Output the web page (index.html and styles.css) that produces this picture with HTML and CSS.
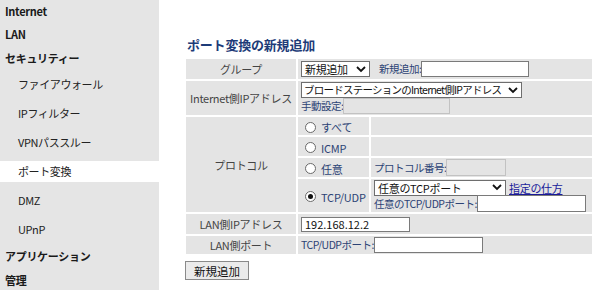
FILE: index.html
```html
<!DOCTYPE html>
<html lang="ja">
<head>
<meta charset="utf-8">
<title>ポート変換の新規追加</title>
<link rel="stylesheet" href="styles.css">
</head>
<body>
<div class="page">
  <nav class="side">
    <div class="top first">Internet</div>
    <div class="top">LAN</div>
    <div class="top">セキュリティー</div>
    <div class="sub">ファイアウォール</div>
    <div class="sub">IPフィルター</div>
    <div class="sub">VPNパススルー</div>
    <div class="sub active">ポート変換</div>
    <div class="sub">DMZ</div>
    <div class="sub">UPnP</div>
    <div class="top">アプリケーション</div>
    <div class="top">管理</div>
  </nav>
  <main class="main">
    <h1 class="title">ポート変換の新規追加</h1>
    <table class="form">
      <colgroup><col class="c1"><col class="c2"><col class="c3"></colgroup>
      <tr class="r-group">
        <th>グループ</th>
        <td colspan="2" class="pad">
          <div class="line">
            <span class="select s-group"><span class="val">新規追加</span><svg class="chev" viewBox="0 0 10 7"><polyline points="1,1 5,5 9,1"/></svg></span>
            <span class="lbl l-new">新規追加:</span><span class="input i-new"></span>
          </div>
        </td>
      </tr>
      <tr class="r-inet">
        <th>Internet側IPアドレス</th>
        <td colspan="2" class="pad">
          <div class="line">
            <span class="select s-inet"><span class="val">ブロードステーションのInternet側IPアドレス</span><svg class="chev" viewBox="0 0 10 7"><polyline points="1,1 5,5 9,1"/></svg></span>
          </div>
          <div class="line">
            <span class="lbl">手動設定:</span><span class="input disabled i-manual"></span>
          </div>
        </td>
      </tr>
      <tr class="r-all">
        <th rowspan="4">プロトコル</th>
        <td class="radio-cell"><span class="radio"></span><span class="rlbl">すべて</span></td>
        <td></td>
      </tr>
      <tr class="r-icmp">
        <td class="radio-cell"><span class="radio"></span><span class="rlbl">ICMP</span></td>
        <td></td>
      </tr>
      <tr class="r-any">
        <td class="radio-cell"><span class="radio"></span><span class="rlbl">任意</span></td>
        <td class="pad">
          <div class="line"><span class="lbl">プロトコル番号:</span><span class="input disabled i-proto"></span></div>
        </td>
      </tr>
      <tr class="r-tcp">
        <td class="radio-cell"><span class="radio checked"></span><span class="rlbl">TCP/UDP</span></td>
        <td class="pad">
          <div class="line">
            <span class="select s-tcp"><span class="val">任意のTCPポート</span><svg class="chev" viewBox="0 0 10 7"><polyline points="1,1 5,5 9,1"/></svg></span>
            <a class="link" href="#">指定の仕方</a>
          </div>
          <div class="line">
            <span class="lbl">任意のTCP/UDPポート:</span><span class="input i-tcp"></span>
          </div>
        </td>
      </tr>
      <tr class="r-lanip">
        <th>LAN側IPアドレス</th>
        <td colspan="2" class="pad"><span class="input i-lanip">192.168.12.2</span></td>
      </tr>
      <tr class="r-lanport">
        <th>LAN側ポート</th>
        <td colspan="2" class="pad">
          <div class="line"><span class="lbl">TCP/UDPポート:</span><span class="input i-lanport"></span></div>
        </td>
      </tr>
    </table>
    <button class="btn" type="button">新規追加</button>
  </main>
</div>
</body>
</html>
```

FILE: styles.css
```css
html, body {
  margin: 0;
  padding: 0;
  background: #ffffff;
}
body {
  font-family: "Noto Sans CJK JP", "Noto Sans", sans-serif;
  font-size: 11px;
  color: #333333;
}
.page {
  display: flex;
  height: 290px;
  width: 600px;
  overflow: hidden;
}

/* sidebar */
.side {
  flex: none;
  width: 159px;
  background: #e5e5e5;
  display: flex;
  flex-direction: column;
}
.side .top {
  height: 24px;
  line-height: 24px;
  padding-left: 5px;
  font-weight: bold;
  color: #1a1a1a;
  letter-spacing: -0.3px;
}
.side .top.first {
  height: 22px;
  line-height: 22px;
}
.side .sub {
  height: 21px;
  line-height: 21px;
  margin: 4px 0;
  padding-left: 18px;
  color: #222222;
  letter-spacing: -0.4px;
}
.side .sub.active {
  background: #ffffff;
}

/* main */
.main {
  flex: 1;
  padding: 37px 0 0 25px;
}
.title {
  margin: 0 0 4px 3px;
  font-size: 13px;
  line-height: 16px;
  font-weight: bold;
  color: #1d3b78;
  letter-spacing: -0.2px;
}
.form {
  border-spacing: 2px;
  width: 410px;
  table-layout: fixed;
}
.form col.c1 { width: 110px; }
.form col.c2 { width: 71px; }
.form col.c3 { width: 221px; }
.form th,
.form td {
  background: #e4e4e4;
  padding: 0;
  vertical-align: middle;
}
.form th {
  font-weight: normal;
  text-align: center;
  font-size: 11px;
  color: #444444;
  letter-spacing: -0.3px;
}
.r-group td, .r-group th { height: 20px; }
.r-inet td, .r-inet th { height: 34px; }
.r-all td { height: 18px; }
.r-icmp td { height: 19px; }
.r-any td { height: 19px; }
.r-tcp td { height: 33px; }
.r-lanip td, .r-lanip th { height: 20px; }
.r-lanport td, .r-lanport th { height: 18px; }

.pad { padding-left: 3px !important; }
.line {
  display: flex;
  align-items: center;
  height: 16px;
}
.lbl {
  font-size: 10.5px;
  line-height: 16px;
  color: #2c4375;
  letter-spacing: -0.5px;
  white-space: nowrap;
}
.l-new { margin-left: 9px; }

.select {
  display: inline-flex;
  align-items: center;
  box-sizing: border-box;
  height: 16px;
  border: 1px solid #6e6e6e;
  background: #ffffff;
  font-size: 11px;
  color: #111111;
  padding-left: 3px;
  white-space: nowrap;
}
.select .val {
  flex: 1;
  line-height: 14px;
  white-space: nowrap;
}
.select .chev {
  flex: none;
  width: 10px;
  height: 7px;
  margin: 0 3px 0 3px;
  fill: none;
  stroke: #111111;
  stroke-width: 1.8;
}
.s-group { width: 69px; letter-spacing: -0.3px; }
.s-inet { width: 221px; letter-spacing: -0.75px; font-size: 10.5px; padding-left: 2px; }
.s-inet .chev { margin-left: 1px; }
.s-tcp { width: 132px; letter-spacing: -0.3px; }

.input {
  display: inline-block;
  box-sizing: border-box;
  height: 16px;
  border: 1px solid #7a7a7a;
  background: #ffffff;
  font-size: 11px;
  line-height: 14px;
  padding-left: 3px;
  color: #111111;
}
.input.disabled {
  background: #e4e4e4;
  border-color: #c2c2c2;
}
.i-new { width: 108px; }
.i-manual { width: 107px; }
.i-proto { width: 60px; height: 17px; }
.i-tcp { width: 109px; height: 17px; }
.i-lanip { width: 109px; height: 15px; line-height: 13px; }
.i-lanport { width: 109px; }

.radio-cell {
  padding-left: 7px !important;
  white-space: nowrap;
}
.radio-cell > * { vertical-align: middle; }
.radio {
  display: inline-block;
  box-sizing: border-box;
  width: 11px;
  height: 11px;
  border-radius: 50%;
  border: 1px solid #6a6a6a;
  background: #ffffff;
  position: relative;
}
.radio.checked::after {
  content: "";
  position: absolute;
  left: 2px;
  top: 2px;
  width: 5px;
  height: 5px;
  border-radius: 50%;
  background: #111111;
}
.rlbl {
  margin-left: 5px;
  font-size: 11px;
  color: #2c4375;
  letter-spacing: -0.2px;
}

.link {
  margin-left: 3px;
  font-size: 11px;
  line-height: 16px;
  color: #1a1a9a;
  text-decoration: underline;
  letter-spacing: -0.3px;
  white-space: nowrap;
}

.btn {
  display: block;
  margin: 5px 0 0 1px;
  box-sizing: border-box;
  width: 64px;
  height: 19px;
  padding: 0;
  border: 1px solid #8a8a8a;
  background: #ebebeb;
  font-family: "Noto Sans CJK JP", "Noto Sans", sans-serif;
  font-size: 11.5px;
  line-height: 16px;
  color: #111111;
}
```
